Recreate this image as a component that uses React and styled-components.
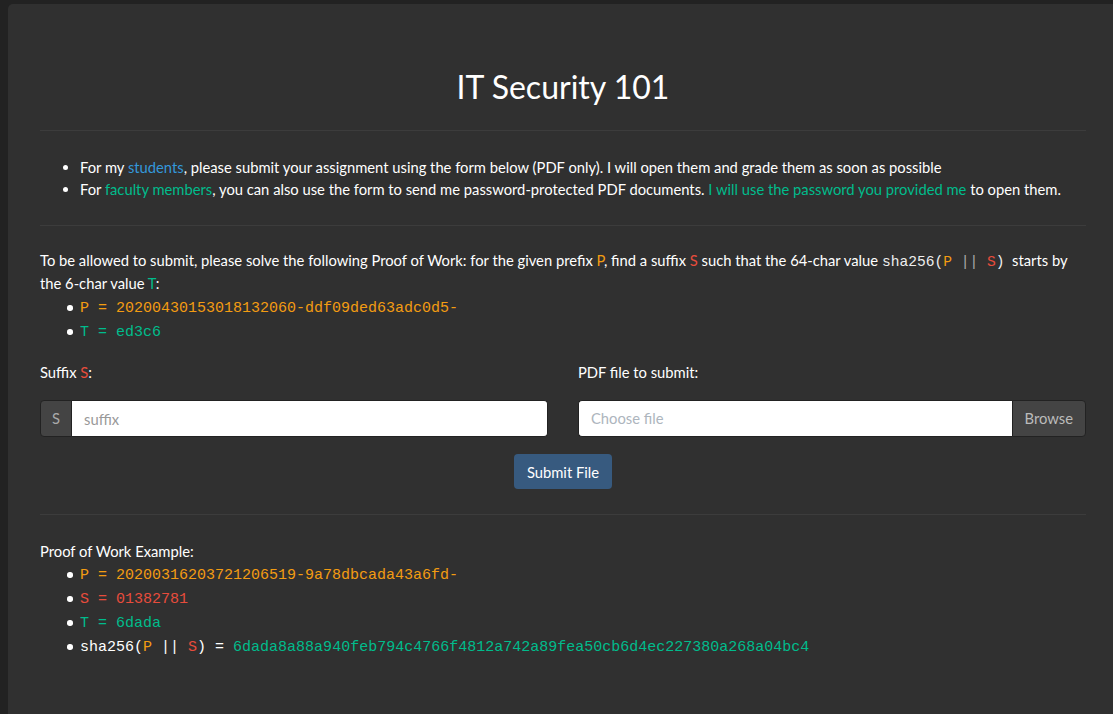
import React from "react";
import styled, { createGlobalStyle } from "styled-components";

const colors = {
  orange: "#f39c12",
  red: "#e74c3c",
  green: "#00bc8c",
  blue: "#3498db",
};

const GlobalStyle = createGlobalStyle`
  html, body {
    margin: 0;
    padding: 0;
    overflow: hidden;
    background-color: #222222;
  }
  body {
    font-family: Lato, "Open Sans", "Liberation Sans", sans-serif;
    font-size: 14.76px;
    line-height: 1.5;
    color: #ffffff;
  }
`;

const Page = styled.div`
  padding: 4px 0 0 8px;
  min-height: 714px;
  box-sizing: border-box;
`;

const Jumbotron = styled.div`
  width: 1110px;
  min-height: 720px;
  box-sizing: border-box;
  padding: 62px 32px 40px 32px;
  background-color: #303030;
  border-radius: 5px;
`;

const Title = styled.h1`
  margin: 0;
  font-size: 32px;
  font-weight: 400;
  line-height: 42px;
  text-align: center;
`;

const Rule = styled.hr`
  margin: ${(p) => p.$top}px 0 ${(p) => p.$bottom}px 0;
  border: 0;
  border-top: 1px solid #3c3c3c;
`;

const List = styled.ul`
  margin: ${(p) => p.$top || 0}px 0 0 0;
  padding-left: 40px;
`;

const Item = styled.li`
  line-height: 22px;
`;

const CodeItem = styled.li`
  position: relative;
  list-style: none;
  font-family: "Liberation Mono", monospace;
  font-size: 15px;
  line-height: 24px;
  color: #ffffff;

  &::before {
    content: "";
    position: absolute;
    left: -13px;
    top: 8px;
    width: 5.5px;
    height: 5.5px;
    border-radius: 50%;
    background-color: #ffffff;
  }
`;

const Colored = styled.span`
  color: ${(p) => p.$color};
`;

const Text = styled.p`
  margin: 0;
  line-height: 23px;
`;

const InlineCode = styled.span`
  font-family: "Liberation Mono", monospace;
  font-size: 14.6px;
  line-height: 1;
  color: #eeeeee;
`;

const Pipes = styled.span`
  color: #aaaaaa;
`;

const FormRow = styled.div`
  display: grid;
  grid-template-columns: 1fr 1fr;
  column-gap: 30px;
  margin-top: 16px;
`;

const Field = styled.div`
  display: flex;
  flex-direction: column;
`;

const Label = styled.label`
  line-height: 22px;
  margin-bottom: 17px;
`;

const InputGroup = styled.div`
  display: flex;
  height: 37px;
`;

const Addon = styled.span`
  display: flex;
  align-items: center;
  justify-content: center;
  box-sizing: border-box;
  padding: 0 ${(p) => p.$pad}px;
  background-color: #444444;
  color: ${(p) => p.$color};
  border: 1px solid #222222;
  border-radius: ${(p) => (p.$side === "left" ? "4px 0 0 4px" : "0 4px 4px 0")};
`;

const TextInput = styled.input`
  flex: 1;
  min-width: 0;
  box-sizing: border-box;
  height: 37px;
  padding: 6px 12px;
  border: 1px solid #222222;
  border-left: 0;
  border-radius: 0 4px 4px 0;
  background-color: #ffffff;
  font-family: Lato, sans-serif;
  font-size: 14.76px;
  color: #303030;
  outline: none;

  &::placeholder {
    color: #999999;
  }
`;

const FileField = styled.div`
  flex: 1;
  display: flex;
  align-items: center;
  box-sizing: border-box;
  padding: 0 12px;
  background-color: #ffffff;
  border: 1px solid #222222;
  border-right: 0;
  border-radius: 4px 0 0 4px;
  color: #adb5bd;
`;

const Actions = styled.div`
  display: flex;
  justify-content: center;
  margin-top: 17px;
`;

const Button = styled.button`
  height: 35px;
  padding: 0 13px;
  border: 0;
  border-radius: 4px;
  background-color: #375a7f;
  color: #ffffff;
  font-family: Lato, sans-serif;
  font-size: 14.76px;
  cursor: pointer;
`;

export default function App() {
  return (
    <>
      <GlobalStyle />
      <Page>
        <Jumbotron>
          <Title>IT Security 101</Title>
          <Rule $top={22} $bottom={25} />
          <List>
            <Item>
              For my <Colored $color={colors.blue}>students</Colored>, please submit your assignment
              using the form below (PDF only). I will open them and grade them as soon as possible
            </Item>
            <Item>
              For <Colored $color={colors.green}>faculty members</Colored>, you can also use the form to
              send me password-protected PDF documents.{" "}
              <Colored $color={colors.green}>I will use the password you provided me</Colored> to open
              them.
            </Item>
          </List>
          <Rule $top={25} $bottom={23} />
          <Text>
            To be allowed to submit, please solve the following Proof of Work: for the given prefix{" "}
            <Colored $color={colors.orange}>P</Colored>, find a suffix{" "}
            <Colored $color={colors.red}>S</Colored> such that the 64-char value{" "}
            <InlineCode>
              sha256(<Colored $color={colors.orange}>P</Colored> <Pipes>||</Pipes>{" "}
              <Colored $color={colors.red}>S</Colored>)
            </InlineCode>{" "}
            &nbsp;starts by the 6-char value <Colored $color={colors.green}>T</Colored>:
          </Text>
          <List $top={2}>
            <CodeItem>
              <Colored $color={colors.orange}>P = 20200430153018132060-ddf09ded63adc0d5-</Colored>
            </CodeItem>
            <CodeItem>
              <Colored $color={colors.green}>T = ed3c6</Colored>
            </CodeItem>
          </List>
          <FormRow>
            <Field>
              <Label>
                Suffix <Colored $color={colors.red}>S</Colored>:
              </Label>
              <InputGroup>
                <Addon $side="left" $pad={11} $color="#aaaaaa">
                  S
                </Addon>
                <TextInput placeholder="suffix" />
              </InputGroup>
            </Field>
            <Field>
              <Label>PDF file to submit:</Label>
              <InputGroup>
                <FileField>Choose file</FileField>
                <Addon $side="right" $pad={12} $color="#bbbbbb">
                  Browse
                </Addon>
              </InputGroup>
            </Field>
          </FormRow>
          <Actions>
            <Button type="button">Submit File</Button>
          </Actions>
          <Rule $top={25} $bottom={25} />
          <Text>Proof of Work Example:</Text>
          <List $top={1}>
            <CodeItem>
              <Colored $color={colors.orange}>P = 20200316203721206519-9a78dbcada43a6fd-</Colored>
            </CodeItem>
            <CodeItem>
              <Colored $color={colors.red}>S = 01382781</Colored>
            </CodeItem>
            <CodeItem>
              <Colored $color={colors.green}>T = 6dada</Colored>
            </CodeItem>
            <CodeItem>
              sha256(<Colored $color={colors.orange}>P</Colored> ||{" "}
              <Colored $color={colors.red}>S</Colored>) ={" "}
              <Colored $color={colors.green}>
                6dada8a88a940feb794c4766f4812a742a89fea50cb6d4ec227380a268a04bc4
              </Colored>
            </CodeItem>
          </List>
        </Jumbotron>
      </Page>
    </>
  );
}
